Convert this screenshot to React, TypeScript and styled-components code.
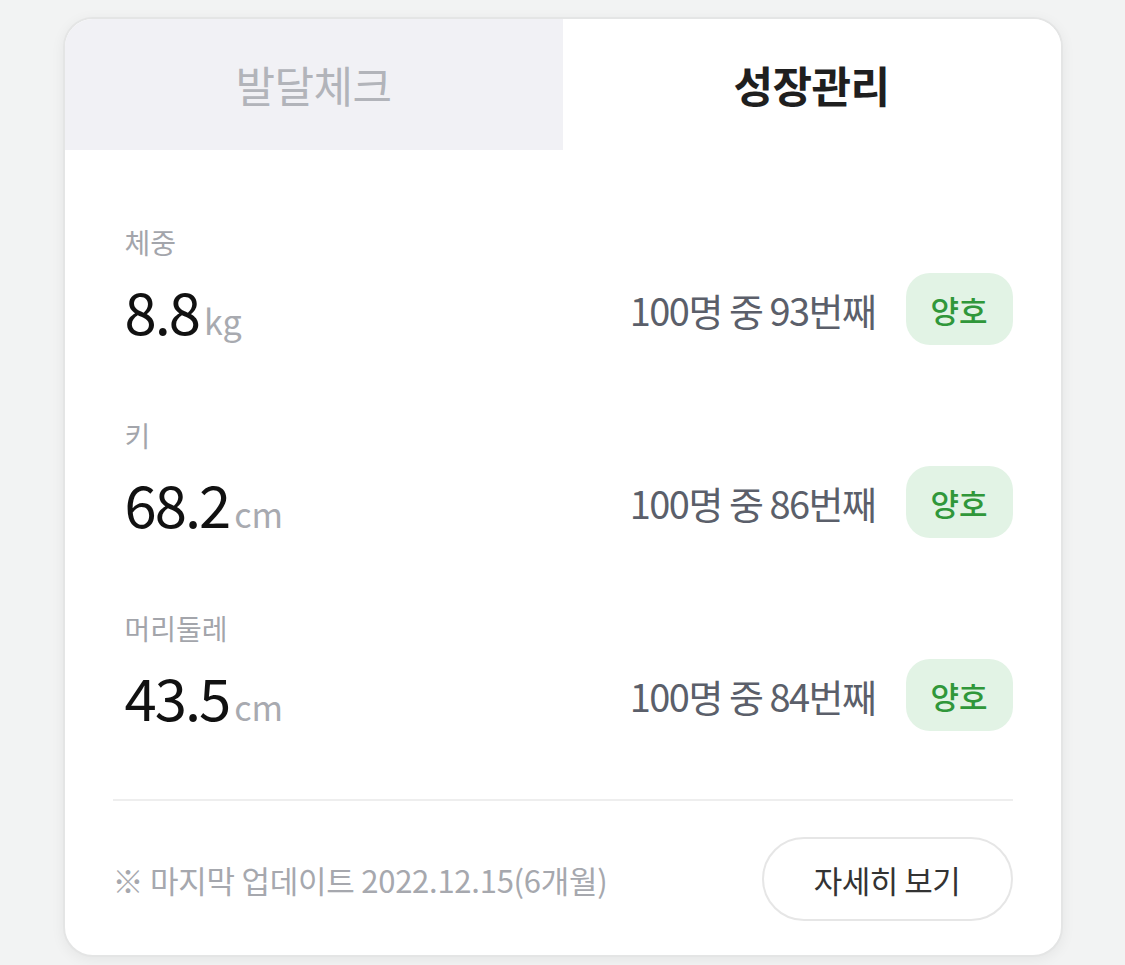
import * as React from 'react';
import styled, { createGlobalStyle } from 'styled-components';

const GlobalStyle = createGlobalStyle`
  html, body {
    margin: 0;
    padding: 0;
    background: #f2f3f3;
    font-family: "Noto Sans CJK KR", "Noto Sans", sans-serif;
  }
`;

const Page = styled.div`
  padding: 17px 0 8px;
  display: flex;
  justify-content: center;
`;

const Card = styled.div`
  width: 1000px;
  height: 940px;
  box-sizing: border-box;
  background: #fff;
  border: 2px solid #e4e5e5;
  border-radius: 30px;
  box-shadow: 0 3px 14px rgba(0, 0, 0, 0.06);
  overflow: hidden;
  display: flex;
  flex-direction: column;
`;

const Tabs = styled.div`
  display: flex;
  height: 131px;
  flex-shrink: 0;
`;

const Tab = styled.div<{ $active?: boolean }>`
  flex: 1;
  display: flex;
  align-items: center;
  justify-content: center;
  padding-bottom: 2px;
  box-sizing: border-box;
  font-size: 43px;
  letter-spacing: -0.5px;
  font-weight: ${(p) => (p.$active ? 700 : 400)};
  color: ${(p) => (p.$active ? '#1f1f1f' : '#b2b4ba')};
  background: ${(p) => (p.$active ? '#ffffff' : '#f1f1f5')};
`;

const Content = styled.div`
  padding: 74px 48px 0 48px;
  display: flex;
  flex-direction: column;
`;

const Rows = styled.div`
  display: flex;
  flex-direction: column;
  gap: 72px;
  padding-left: 12px;
`;

const Row = styled.div`
  display: flex;
  flex-direction: column;
`;

const Label = styled.div`
  font-size: 28px;
  line-height: 36px;
  color: #a3a5ab;
`;

const Line = styled.div`
  margin-top: 13px;
  height: 72px;
  display: flex;
  align-items: center;
  justify-content: space-between;
`;

const Value = styled.div`
  display: flex;
  align-items: baseline;
  padding-top: 8px;
`;

const Number = styled.span`
  font-size: 58px;
  line-height: 1;
  letter-spacing: -2px;
  color: #111;
`;

const Unit = styled.span`
  margin-left: 5px;
  font-size: 34px;
  color: #a8aab0;
`;

const Rank = styled.div`
  display: flex;
  align-items: center;
  gap: 30px;
`;

const RankText = styled.span`
  font-size: 38px;
  letter-spacing: -1.5px;
  color: #5b5f6a;
`;

const Badge = styled.span`
  width: 107px;
  height: 72px;
  border-radius: 24px;
  background: #e2f3e5;
  color: #30973a;
  font-size: 31px;
  font-weight: 500;
  display: flex;
  align-items: center;
  justify-content: center;
`;

const Divider = styled.hr`
  margin: 68px 0 0;
  border: none;
  height: 2px;
  background: #eeeeee;
`;

const Footer = styled.div`
  display: flex;
  align-items: center;
  justify-content: space-between;
  padding: 36px 0;
`;

const Updated = styled.span`
  font-size: 31px;
  letter-spacing: -0.25px;
  color: #a6a8ae;
`;

const DetailButton = styled.button`
  width: 251px;
  height: 84px;
  border: 2px solid #e6e6e6;
  border-radius: 42px;
  background: #fff;
  font-family: inherit;
  font-size: 31px;
  letter-spacing: -0.5px;
  color: #333;
  cursor: pointer;
`;

const items = [
  { label: '체중', value: '8.8', unit: 'kg', rank: '100명 중 93번째' },
  { label: '키', value: '68.2', unit: 'cm', rank: '100명 중 86번째' },
  { label: '머리둘레', value: '43.5', unit: 'cm', rank: '100명 중 84번째' },
];

export default function App() {
  return (
    <>
      <GlobalStyle />
      <Page>
        <Card>
          <Tabs>
            <Tab>발달체크</Tab>
            <Tab $active>성장관리</Tab>
          </Tabs>
          <Content>
            <Rows>
              {items.map((it) => (
                <Row key={it.label}>
                  <Label>{it.label}</Label>
                  <Line>
                    <Value>
                      <Number>{it.value}</Number>
                      <Unit>{it.unit}</Unit>
                    </Value>
                    <Rank>
                      <RankText>{it.rank}</RankText>
                      <Badge>양호</Badge>
                    </Rank>
                  </Line>
                </Row>
              ))}
            </Rows>
            <Divider />
            <Footer>
              <Updated>※ 마지막 업데이트 2022.12.15(6개월)</Updated>
              <DetailButton>자세히 보기</DetailButton>
            </Footer>
          </Content>
        </Card>
      </Page>
    </>
  );
}
